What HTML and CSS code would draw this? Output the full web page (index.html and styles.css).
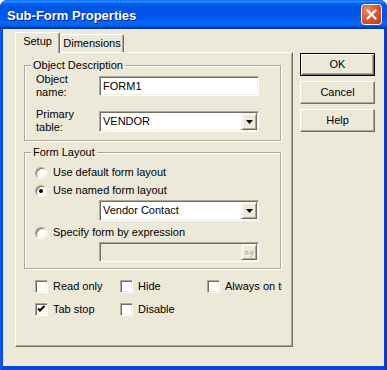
FILE: index.html
```html
<!DOCTYPE html>
<html>
<head>
<meta charset="utf-8">
<link rel="stylesheet" href="styles.css">
</head>
<body>
<div class="window">
  <div class="titlebar">
    <span class="title">Sub-Form Properties</span>
    <span class="close">
      <svg width="21" height="21" viewBox="0 0 21 21">
        <defs>
          <radialGradient id="cg" cx="0.3" cy="0.3" r="0.9">
            <stop offset="0" stop-color="#F08A63"/>
            <stop offset="0.5" stop-color="#E0562F"/>
            <stop offset="1" stop-color="#C23A17"/>
          </radialGradient>
        </defs>
        <rect x="0.5" y="0.5" width="20" height="20" rx="3" fill="url(#cg)" stroke="#fff"/>
        <path d="M6.5 6.5 L14.5 14.5 M14.5 6.5 L6.5 14.5" stroke="#fff" stroke-width="2" stroke-linecap="square"/>
      </svg>
    </span>
  </div>
  <div class="frame">
    <div class="client">
      <div class="tabarea">
        <div class="tabs">
          <div class="tab active">Setup</div>
          <div class="tab">Dimensions</div>
        </div>
        <div class="panel">
          <fieldset class="group">
            <legend>Object Description</legend>
            <div class="gbody desc">
              <div class="row">
                <div class="lbl">Object<br>name:</div>
                <div class="edit">FORM1</div>
              </div>
              <div class="row">
                <div class="lbl">Primary<br>table:</div>
                <div class="combo"><span class="ctext">VENDOR</span><span class="drop"><svg width="7" height="4" viewBox="0 0 7 4"><polygon points="0,0 7,0 3.5,4" fill="#000"/></svg></span></div>
              </div>
            </div>
          </fieldset>
          <fieldset class="group second">
            <legend>Form Layout</legend>
            <div class="gbody layout">
              <div class="opt"><span class="radio"></span><span>Use default form layout</span></div>
              <div class="opt o2"><span class="radio on"></span><span>Use named form layout</span></div>
              <div class="combo indent c2"><span class="ctext">Vendor Contact</span><span class="drop"><svg width="7" height="4" viewBox="0 0 7 4"><polygon points="0,0 7,0 3.5,4" fill="#000"/></svg></span></div>
              <div class="opt o3"><span class="radio"></span><span>Specify form by expression</span></div>
              <div class="edit disabled indent e2"><span class="ctext"></span><span class="xy">x-y</span></div>
            </div>
          </fieldset>
          <div class="checks">
            <div class="chk"><span class="box"></span><span>Read only</span></div>
            <div class="chk"><span class="box"></span><span>Hide</span></div>
            <div class="chk clip"><span class="box"></span><span>Always on top</span></div>
            <div class="chk"><span class="box"><svg width="9" height="9" viewBox="0 0 9 9"><polyline points="1,3.5 3,5.5 7.5,1" fill="none" stroke="#000" stroke-width="2"/></svg></span><span>Tab stop</span></div>
            <div class="chk"><span class="box"></span><span>Disable</span></div>
          </div>
        </div>
      </div>
      <div class="buttons">
        <div class="btn default">OK</div>
        <div class="btn">Cancel</div>
        <div class="btn">Help</div>
      </div>
    </div>
  </div>
</div>
</body>
</html>
```
FILE: styles.css
```css
* { box-sizing: border-box; }
html, body { margin: 0; padding: 0; background: #fff; }
body {
  width: 387px; height: 370px; overflow: hidden;
  font-family: "Liberation Sans", Arial, sans-serif;
  font-size: 11px; color: #000; line-height: 13px;
}
.window {
  width: 387px; height: 370px;
  display: flex; flex-direction: column;
  border-radius: 7px 7px 0 0; overflow: hidden;
  background: #0A3BD6;
}
.titlebar {
  height: 29px; flex: none;
  display: flex; align-items: center;
  padding: 0 5px 0 7px;
  background: linear-gradient(to bottom, #0058EE 0%, #3593FF 4%, #288EFF 6%, #127DFF 8%, #036FFC 10%, #0262EE 14%, #0057E5 20%, #0054E3 24%, #0055EB 56%, #005BF5 66%, #026AFE 76%, #0062EF 86%, #0052D6 92%, #0040AB 94%, #003092 100%);
}
.title {
  flex: 1;
  font-family: "Liberation Sans", Arial, sans-serif;
  font-weight: bold; font-size: 13px;
  color: #fff; text-shadow: 1px 1px #0F1E89;
  padding-top: 1px;
}
.close { width: 21px; height: 21px; display: block; }
.close svg { display: block; }
.frame {
  flex: 1;
  padding: 0 3px 4px 3px;
  background: linear-gradient(to right, #0D5CF0 0, #0A4EE6 2px, #0A45DE 3px, #0A45DE calc(100% - 3px), #0830C0 100%);
}
.client {
  height: 100%;
  background: #ECE9D8;
  display: flex;
  padding: 3px 0 0 12px;
}
.tabarea { width: 278px; display: flex; flex-direction: column; }
.tabs { display: flex; align-items: flex-end; height: 20px; position: relative; z-index: 1; }
.tab {
  height: 18px; width: 64px;
  text-align: center;
  padding-top: 2px;
  background: #ECE9D8;
  border-left: 1px solid #fff; border-top: 1px solid #fff;
  border-right: 1px solid #716F64;
  box-shadow: inset -1px 0 #ACA899;
  border-radius: 2px 2px 0 0;
}
.tab.active { width: 45px; height: 21px; margin-bottom: -1px; padding-top: 2px; }
.panel {
  height: 295px;
  border: 1px solid #716F64;
  border-left-color: #fff; border-top-color: #fff;
  box-shadow: inset -1px -1px #ACA899;
  padding: 6px 0 0 8px;
}
.group {
  margin: 0; padding: 0;
  width: 257px; min-width: 0;
  border: 1px solid #ACA899;
  box-shadow: inset 1px 1px #fff, 1px 1px #fff;
}
.group legend {
  margin-left: 6px; padding: 0 2px;
  line-height: 13px; background: #ECE9D8;
}
.group.second { margin-top: 5px; }
.gbody { padding: 0 0 6px 10px; display: flex; flex-direction: column; }
.desc { padding-top: 1px; gap: 9px; }
.row { display: flex; align-items: center; height: 26px; }
.lbl { width: 64px; padding-left: 1px; }
.edit, .combo {
  width: 160px; height: 20px;
  background: #fff;
  border: 1px solid #ACA899;
  border-right-color: #fff; border-bottom-color: #fff;
  box-shadow: inset 1px 1px #716F64, inset -1px -1px #F1EFE2;
  display: flex; align-items: center;
  padding: 1px 1px 1px 3px;
  white-space: nowrap;
}
.combo { height: 21px; }
.ctext { flex: 1; }
.drop, .xy {
  width: 16px; height: 17px;
  background: #ECE9D8;
  border: 1px solid #716F64;
  border-left-color: #F1EFE2; border-top-color: #F1EFE2;
  box-shadow: inset 1px 1px #fff, inset -1px -1px #ACA899;
  display: flex; align-items: center; justify-content: center;
}
.drop svg { display: block; margin-top: 1px; }
.edit.disabled { background: #ECE9D8; }
.xy { height: 16px; font-size: 7px; font-weight: bold; color: #ACA899; text-shadow: 1px 1px #fff; letter-spacing: -0.3px; }
.layout { padding-top: 7px; }
.opt { display: flex; align-items: center; height: 13px; gap: 6px; }
.o2 { margin-top: 5px; }
.o3 { margin-top: 5px; }
.indent { margin-left: 64px; }
.c2 { margin-top: 3px; }
.e2 { margin-top: 3px; }
.radio {
  width: 12px; height: 12px; flex: none;
  border-radius: 50%;
  background: #fff;
  border: 1px solid #ACA899;
  border-right-color: #fff; border-bottom-color: #fff;
  box-shadow: inset 1px 1px #716F64, inset -1px -1px #F1EFE2;
  display: flex; align-items: center; justify-content: center;
}
.radio.on::after {
  content: ""; width: 4px; height: 4px; border-radius: 50%; background: #000;
}
.checks {
  margin: 11px 0 0 11px;
  display: grid;
  grid-template-columns: 85px 87px 75px;
  grid-auto-rows: 13px;
  row-gap: 10px;
}
.chk { display: flex; align-items: center; gap: 5px; white-space: nowrap; overflow: hidden; }
.box {
  width: 13px; height: 13px; flex: none;
  background: #fff;
  border: 1px solid #ACA899;
  border-right-color: #fff; border-bottom-color: #fff;
  box-shadow: inset 1px 1px #716F64, inset -1px -1px #F1EFE2;
  padding: 1px;
}
.box svg { display: block; }
.buttons {
  margin: 21px 0 0 7px;
  display: flex; flex-direction: column; gap: 5px;
}
.btn {
  width: 75px; height: 23px;
  display: flex; align-items: center; justify-content: center;
  border: 1px solid #716F64;
  border-left-color: #fff; border-top-color: #fff;
  box-shadow: inset -1px -1px #ACA899;
}
.btn.default {
  border: 1px solid #000;
  box-shadow: inset 1px 1px #fff, inset -1px -1px #716F64, inset -2px -2px #ACA899;
}
```
